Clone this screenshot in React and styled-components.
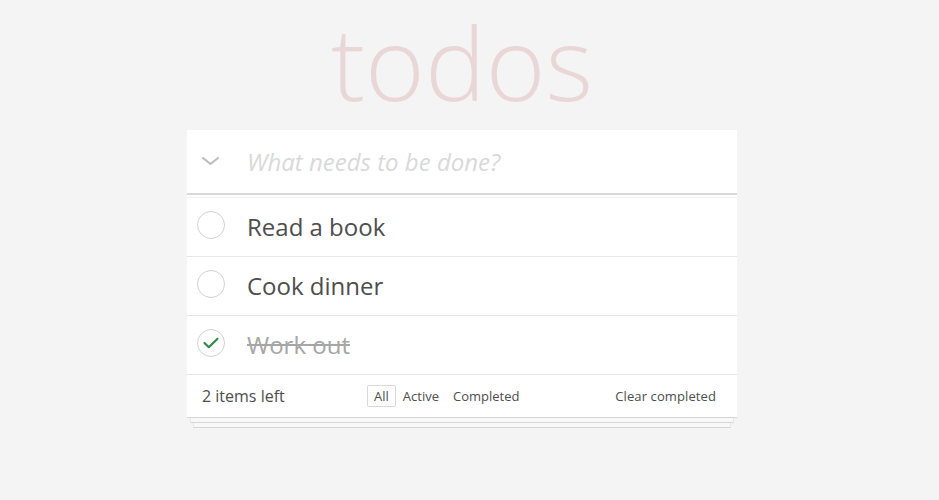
import React, { useState } from "react";
import styled, { createGlobalStyle } from "styled-components";

const Global = createGlobalStyle`
  html, body { margin: 0; padding: 0; background: #f4f4f4; }
  body {
    font-family: "Open Sans", "Liberation Sans", sans-serif;
    color: #4d4d4d;
    -webkit-font-smoothing: antialiased;
  }
`;

const Page = styled.div`
  padding-right: 15px;
`;

const Column = styled.div`
  max-width: 550px;
  margin: 0 auto;
`;

const Title = styled.h1`
  margin: 0;
  padding-top: 2px;
  font-size: 102px;
  line-height: 120px;
  font-weight: 300;
  text-align: center;
  color: rgba(175, 47, 47, 0.15);
`;

const App = styled.section`
  margin-top: 8px;
  background: #fff;
`;

const Header = styled.header`
  display: flex;
  align-items: center;
  height: 63px;
  border-bottom: 2px solid #d9d9d9;
`;

const IconCell = styled.div`
  width: 48px;
  flex: none;
  display: flex;
  align-items: center;
  justify-content: center;
  padding-bottom: ${(p) => (p.$lift ? "5px" : "0")};
`;

const NewTodo = styled.div`
  flex: 1;
  padding-left: 12px;
  font-size: 24px;
  font-style: italic;
  font-weight: 400;
  color: #d9d9d9;
`;

const List = styled.ul`
  list-style: none;
  margin: 2px 0 0;
  padding: 0;
  border-top: 1px solid #f2f2f2;
`;

const Item = styled.li`
  display: flex;
  align-items: center;
  border-bottom: 1px solid #e6e6e6;
`;

const Label = styled.label`
  flex: 1;
  padding: 15px 15px 15px 12px;
  font-size: 24px;
  line-height: 28px;
  color: ${(p) => (p.$done ? "#a6a6a6" : "#4d4d4d")};
  text-decoration: ${(p) => (p.$done ? "line-through" : "none")};
`;

const Footer = styled.footer`
  display: flex;
  align-items: center;
  height: 42px;
  padding: 0 21px 0 15px;
  color: #4d4d4d;
  border-bottom: 1px solid #d6d6d6;
`;

const Count = styled.span`
  font-size: 16px;
  width: 165px;
`;

const Filters = styled.ul`
  display: flex;
  list-style: none;
  margin: 0;
  padding: 0;
  flex: 1;
`;

const Filter = styled.li`
  font-size: 13px;
  padding: 1px 6px;
  border: 1px solid ${(p) => (p.$selected ? "#d9d9d9" : "transparent")};
  border-radius: 2px;
`;

const Clear = styled.span`
  font-size: 13px;
  letter-spacing: 0.1px;
`;

const Sheet = styled.div`
  height: 4px;
  margin: 0 ${(p) => p.$inset}px;
  background: #f8f8f8;
  border: 1px solid #e8e8e8;
  border-top: none;
  border-bottom-color: #d6d6d6;
`;

const Chevron = () => (
  <svg width="20" height="12" viewBox="0 0 20 12">
    <polyline points="2,2 9.5,8 17,2" fill="none" stroke="#bdbdbd" strokeWidth="2.2" strokeLinecap="round" strokeLinejoin="round" />
  </svg>
);

const Toggle = ({ done }) => (
  <svg width="30" height="30" viewBox="0 0 30 30">
    <circle cx="15" cy="15" r="13.5" fill="none" stroke="#d2d2d2" strokeWidth="1" />
    {done && (
      <polyline points="8.5,15 12.8,19.2 21.5,10.8" fill="none" stroke="#2f8a46" strokeWidth="2.2" strokeLinecap="round" strokeLinejoin="round" />
    )}
  </svg>
);

const todos = [
  { text: "Read a book", done: false },
  { text: "Cook dinner", done: false },
  { text: "Work out", done: true },
];

export default function TodoApp() {
  const [filter] = useState("All");
  return (
    <Page>
      <Global />
      <Column>
        <Title>todos</Title>
        <App>
          <Header>
            <IconCell>
              <Chevron />
            </IconCell>
            <NewTodo>What needs to be done?</NewTodo>
          </Header>
          <List>
            {todos.map((t) => (
              <Item key={t.text}>
                <IconCell $lift>
                  <Toggle done={t.done} />
                </IconCell>
                <Label $done={t.done}>{t.text}</Label>
              </Item>
            ))}
          </List>
          <Footer>
            <Count>2 items left</Count>
            <Filters>
              {["All", "Active", "Completed"].map((f) => (
                <Filter key={f} $selected={f === filter}>
                  {f}
                </Filter>
              ))}
            </Filters>
            <Clear>Clear completed</Clear>
          </Footer>
        </App>
        <Sheet $inset={3} />
        <Sheet $inset={6} />
      </Column>
    </Page>
  );
}
